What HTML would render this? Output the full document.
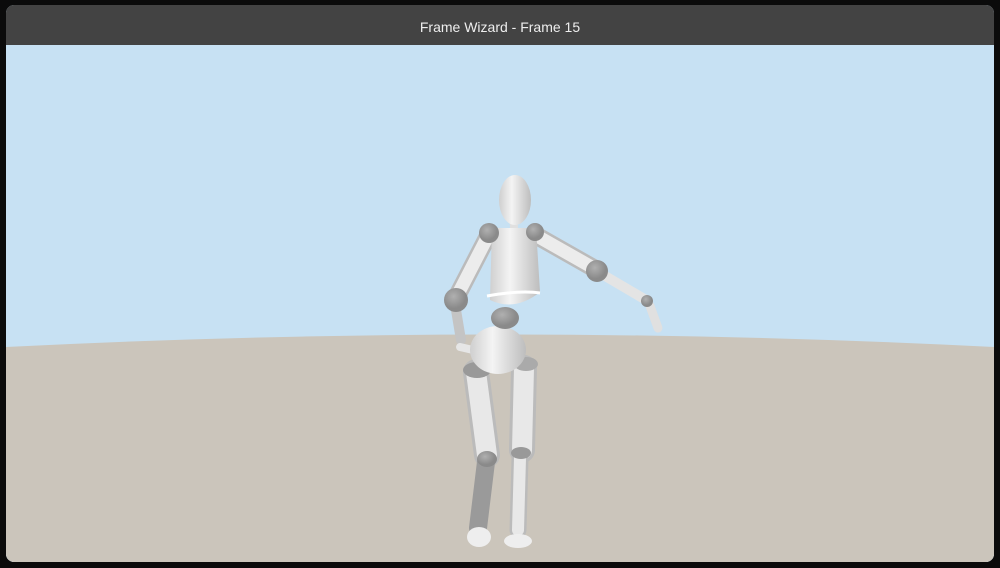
<!DOCTYPE html>
<html><head><style>
html,body{margin:0;padding:0;width:1000px;height:568px;background:#0b0b0b;overflow:hidden}
.win{position:absolute;left:6px;top:5px;width:988px;height:557px;border-radius:8px;overflow:hidden;background:#c6e0f2}
.title{position:absolute;left:0;top:0;width:100%;height:40px;background:#434343;color:#eee;font:14px "Liberation Sans",sans-serif;text-align:center;line-height:44px}
svg{position:absolute;left:0;top:0}
</style></head><body>
<div class="win">
<svg width="988" height="557" viewBox="6 5 988 557">
<defs>
<linearGradient id="w" x1="0" x2="1"><stop offset="0" stop-color="#cfcfcf"/><stop offset=".4" stop-color="#f4f4f4"/><stop offset="1" stop-color="#bdbdbd"/></linearGradient>
<radialGradient id="g" cx=".4" cy=".35"><stop offset="0" stop-color="#b0b0b0"/><stop offset="1" stop-color="#8a8a8a"/></radialGradient>
</defs>
<rect x="6" y="45" width="988" height="520" fill="#c7e1f3"/>
<path d="M6 347 Q500 322 994 347 L994 565 L6 565Z" fill="#cbc5bb"/>
<g stroke-linecap="round" fill="none">
<path d="M476 372 L487 455" stroke="#bbb" stroke-width="26"/>
<path d="M476 372 L487 455" stroke="#e8e8e8" stroke-width="20"/>
<path d="M486 462 L478 528" stroke="#9a9a9a" stroke-width="18"/>
<path d="M524 368 L522 450" stroke="#bbb" stroke-width="26"/>
<path d="M524 368 L522 450" stroke="#e8e8e8" stroke-width="20"/>
<path d="M520 458 L518 530" stroke="#bbb" stroke-width="17"/>
<path d="M520 458 L518 530" stroke="#e8e8e8" stroke-width="12"/>
<path d="M488 236 L456 298" stroke="#bbb" stroke-width="18"/>
<path d="M488 236 L456 298" stroke="#ececec" stroke-width="13"/>
<path d="M455 304 L461 340" stroke="#c4c4c4" stroke-width="10"/>
<path d="M537 236 L597 270" stroke="#bbb" stroke-width="18"/>
<path d="M537 236 L597 270" stroke="#ececec" stroke-width="13"/>
<path d="M600 273 L646 300" stroke="#e4e4e4" stroke-width="10"/>
<path d="M650 306 L658 328" stroke="#e0e0e0" stroke-width="9"/>
<path d="M460 347 L486 353" stroke="#e6e6e6" stroke-width="8"/>
<path d="M513 187 L514 230" stroke="#e0e0e0" stroke-width="8"/>
</g>
<ellipse cx="479" cy="537" rx="12" ry="10" fill="#eee"/>
<ellipse cx="518" cy="541" rx="14" ry="7" fill="#eee"/>
<ellipse cx="487" cy="459" rx="10" ry="8" fill="url(#g)"/>
<ellipse cx="521" cy="453" rx="10" ry="6" fill="#999"/>
<ellipse cx="477" cy="370" rx="14" ry="8" fill="#999"/>
<ellipse cx="526" cy="364" rx="12" ry="7" fill="#aaa"/>
<ellipse cx="498" cy="350" rx="28" ry="24" fill="url(#w)"/>
<ellipse cx="505" cy="318" rx="14" ry="11" fill="url(#g)"/>
<path d="M492 228 L536 228 L540 292 Q515 312 490 300Z" fill="url(#w)"/>
<path d="M487 296 Q520 290 540 293" stroke="#fff" stroke-width="3" fill="none"/>
<circle cx="489" cy="233" r="10" fill="url(#g)"/>
<circle cx="535" cy="232" r="9" fill="url(#g)"/>
<circle cx="456" cy="300" r="12" fill="url(#g)"/>
<circle cx="597" cy="271" r="11" fill="url(#g)"/>
<circle cx="647" cy="301" r="6" fill="url(#g)"/>
<ellipse cx="515" cy="200" rx="16" ry="25" fill="url(#w)"/>
</svg>
<div class="title">Frame Wizard - Frame 15</div>
</div>
</body></html>
